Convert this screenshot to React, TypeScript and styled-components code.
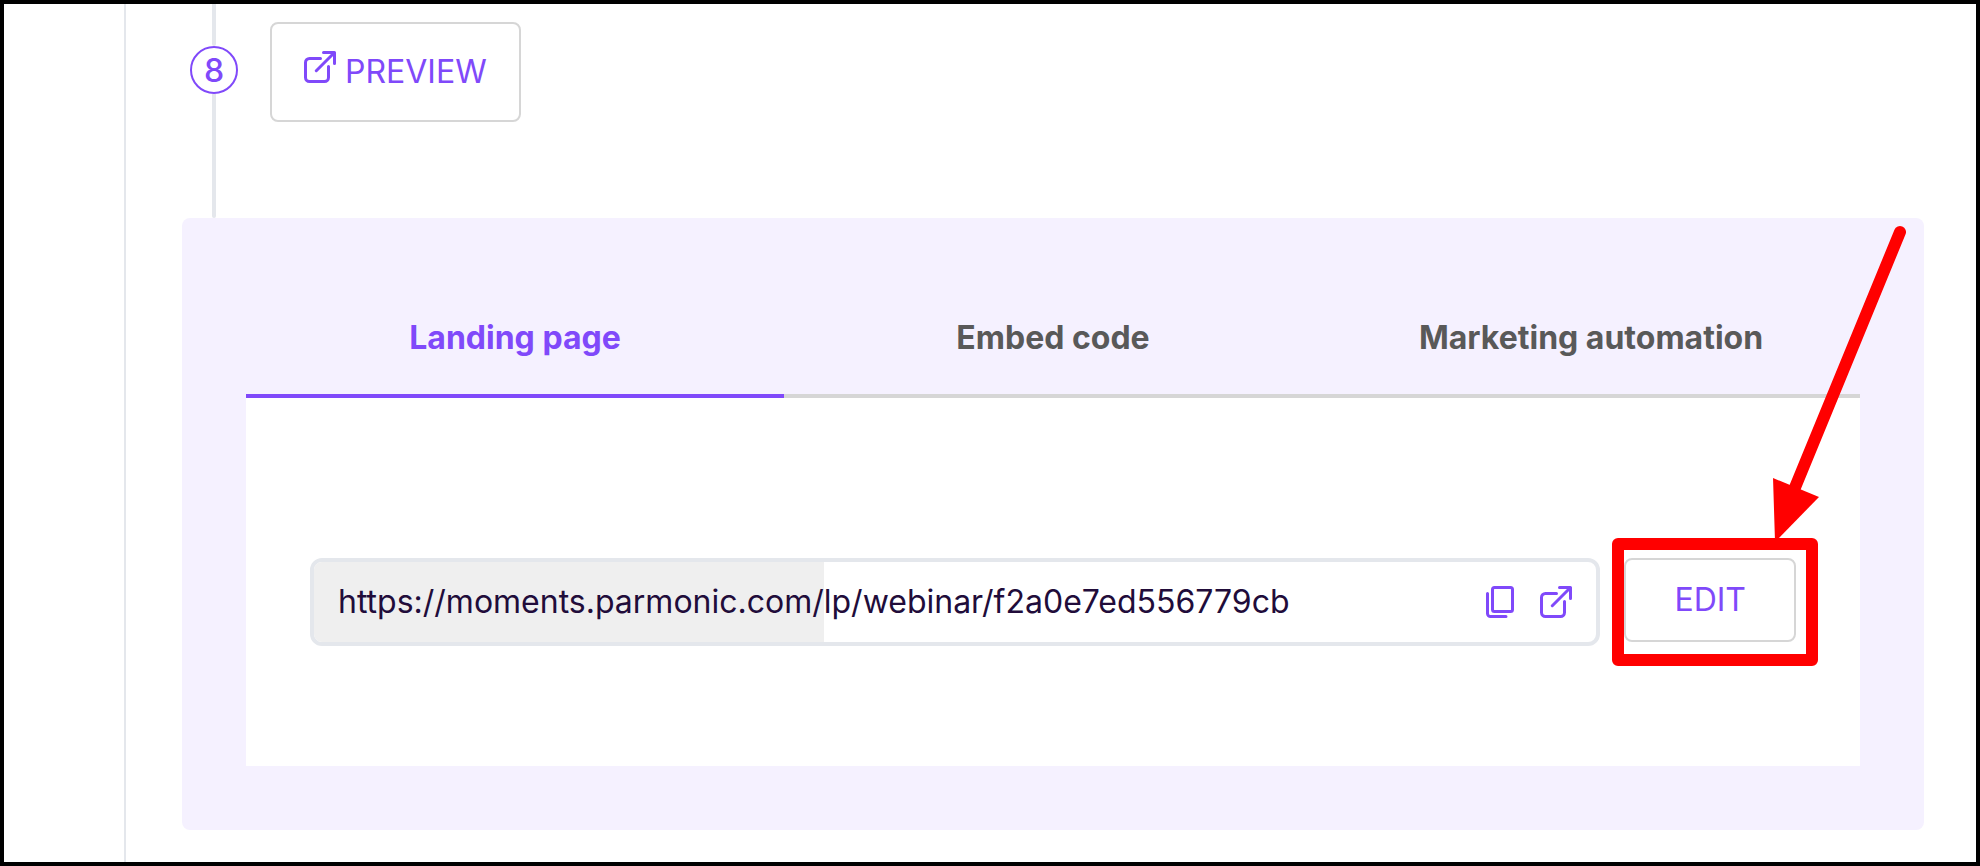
import React, { useState } from "react";
import styled, { createGlobalStyle } from "styled-components";

const violet = "#8049fa";
const line = "#e4e7ec";
const grey = "#d6d6d6";
const red = "#ff0000";

const GlobalStyle = createGlobalStyle`
  *, *::before, *::after { box-sizing: border-box; }
  body { margin: 0; background: #ffffff; }
  body, button, input { font-family: Inter, "Liberation Sans", sans-serif; font-size: 32px; }
`;

const Frame = styled.div`
  display: flex;
  min-height: 100vh;
  border: 4px solid #000000;
  background: #ffffff;
`;

const Rail = styled.aside`
  flex: none;
  width: 122px;
  border-right: 2px solid ${line};
`;

const Main = styled.main`
  flex: 1;
  min-width: 0;
  padding: 0 52px 32px 56px;
`;

const Step = styled.section`
  display: flex;
  gap: 32px;
  padding-left: 8px;
`;

const Timeline = styled.div`
  display: flex;
  flex-direction: column;
  align-items: center;
  width: 48px;
`;

const Connector = styled.span<{ $grow?: boolean }>`
  width: 4px;
  height: 42px;
  flex: ${(p) => (p.$grow ? "1" : "none")};
  border-radius: 0 0 2px 2px;
  background: ${line};
`;

const StepNumber = styled.span`
  display: flex;
  align-items: center;
  justify-content: center;
  width: 48px;
  height: 48px;
  border: 2px solid ${violet};
  border-radius: 50%;
  color: ${violet};
  font-weight: 500;
`;

const OutlineButton = styled.button<{ $size: "large" | "medium" }>`
  display: flex;
  flex: none;
  align-items: center;
  justify-content: center;
  gap: 9px;
  height: ${(p) => (p.$size === "large" ? "100px" : "84px")};
  padding: ${(p) => (p.$size === "large" ? "0 32px" : "0 48px")};
  border: 2px solid ${grey};
  border-radius: 8px;
  background: #ffffff;
  color: ${violet};
  line-height: 40px;
  cursor: pointer;
`;

const StepBody = styled.div`
  padding: 18px 0 96px;
`;

const RaisedIcon = styled.span`
  display: flex;
  padding-bottom: 10px;
`;

const Panel = styled.section`
  padding: 64px;
  border-radius: 8px;
  background: #f5f1ff;
`;

const Tabs = styled.div`
  display: grid;
  grid-template-columns: repeat(3, 1fr);
`;

const Tab = styled.button<{ $active: boolean }>`
  height: 116px;
  padding: 0;
  border: 0;
  border-bottom: 4px solid ${(p) => (p.$active ? violet : grey)};
  background: transparent;
  color: ${(p) => (p.$active ? violet : "#595959")};
  font-weight: 700;
  line-height: 40px;
  cursor: pointer;
`;

const TabPanel = styled.div`
  display: flex;
  gap: 24px;
  padding: 160px 64px 120px;
  background: #ffffff;
`;

const UrlField = styled.div`
  display: flex;
  flex: 1;
  align-items: stretch;
  min-width: 0;
  height: 88px;
  border: 4px solid ${line};
  border-radius: 12px;
  color: #210c3a;
  overflow: hidden;
`;

const Prefix = styled.label`
  display: flex;
  align-items: center;
  padding: 0 0 2px 24px;
  background: #efefef;
`;

const PathInput = styled.input`
  flex: 1;
  min-width: 0;
  padding: 0 0 2px;
  border: 0;
  outline: 0;
  background: transparent;
  color: inherit;
`;

const FieldActions = styled.div`
  display: flex;
  align-items: center;
  gap: 26px;
  padding-right: 24px;
`;

const IconButton = styled.button`
  display: flex;
  padding: 0;
  border: 0;
  background: none;
  color: ${violet};
  cursor: pointer;
`;

const EditArea = styled.div`
  position: relative;
  flex: none;
`;

const Highlight = styled.span`
  position: absolute;
  inset: -20px -22px -20px -12px;
  border: 12px solid ${red};
  border-radius: 6px;
  pointer-events: none;
`;

const Arrow = styled.svg`
  position: absolute;
  right: -114px;
  bottom: 100%;
  pointer-events: none;
`;

const OpenIcon = () => (
  <svg width="32" height="32" viewBox="0 0 32 32" fill="none" stroke="currentColor" strokeWidth="3" strokeLinecap="round" strokeLinejoin="round" aria-hidden="true">
    <path d="M16.500 7.500H5.500a4 4 0 0 0-4 4v15a4 4 0 0 0 4 4h15a4 4 0 0 0 4-4V15.500" />
    <path d="M12.300 19.700 30 2M19.500 1.500h11v11" />
  </svg>
);

const CopyIcon = () => (
  <svg width="28" height="32" viewBox="0 0 28 32" fill="none" stroke="currentColor" strokeWidth="3" strokeLinecap="round" strokeLinejoin="round" aria-hidden="true">
    <rect x="6.500" y="1.500" width="20" height="24" rx="2" />
    <path d="M1.500 7.500v20a3 3 0 0 0 3 3h15.500" />
  </svg>
);

const tabs = ["Landing page", "Embed code", "Marketing automation"];

export default function App() {
  const [active, setActive] = useState(0);
  return (
    <>
      <GlobalStyle />
      <Frame>
        <Rail />
        <Main>
          <Step>
            <Timeline>
              <Connector />
              <StepNumber>8</StepNumber>
              <Connector $grow />
            </Timeline>
            <StepBody>
              <OutlineButton $size="large" type="button">
                <RaisedIcon><OpenIcon /></RaisedIcon>
                PREVIEW
              </OutlineButton>
            </StepBody>
          </Step>
          <Panel>
            <Tabs role="tablist">
              {tabs.map((name, i) => (
                <Tab key={name} role="tab" type="button" aria-selected={i === active} $active={i === active} onClick={() => setActive(i)}>
                  {name}
                </Tab>
              ))}
            </Tabs>
            <TabPanel role="tabpanel">
              <UrlField>
                <Prefix htmlFor="page-path">https://moments.parmonic.com/</Prefix>
                <PathInput id="page-path" defaultValue="lp/webinar/f2a0e7ed556779cb" />
                <FieldActions>
                  <IconButton type="button" aria-label="Copy link"><CopyIcon /></IconButton>
                  <IconButton type="button" aria-label="Open link"><OpenIcon /></IconButton>
                </FieldActions>
              </UrlField>
              <EditArea>
                <OutlineButton $size="medium" type="button">EDIT</OutlineButton>
                <Highlight />
                <Arrow width="140" height="336" viewBox="0 0 140 336" aria-hidden="true">
                  <path d="M130 10 24 268" stroke={red} strokeWidth="12" strokeLinecap="round" />
                  <path d="M3 256 49 275 5 320Z" fill={red} />
                </Arrow>
              </EditArea>
            </TabPanel>
          </Panel>
        </Main>
      </Frame>
    </>
  );
}
